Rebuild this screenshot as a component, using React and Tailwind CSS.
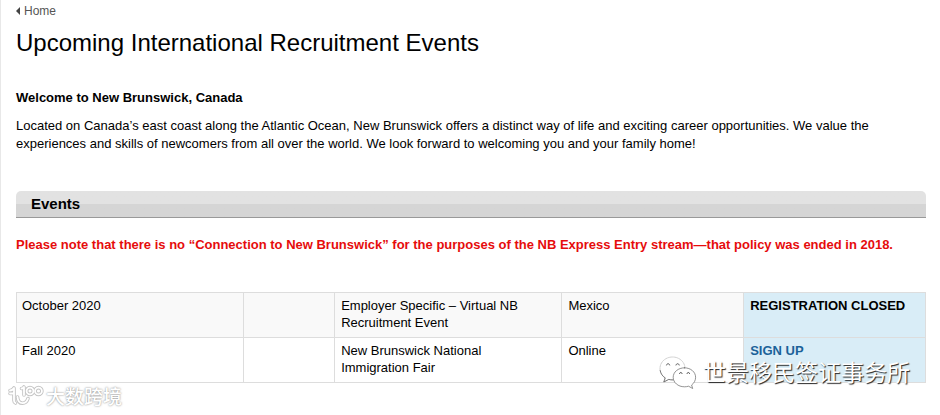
const events = [
    {
        date: 'October 2020',
        name: 'Employer Specific – Virtual NB Recruitment Event',
        place: 'Mexico',
        closed: true
    },
    {
        date: 'Fall 2020',
        name: 'New Brunswick National Immigration Fair',
        place: 'Online',
        closed: false
    }
];

function ChatIcon() {
    return (
        <svg viewBox="0 0 38 34" className="w-[38px] h-[34px]" fill="#fff" stroke="#777" strokeWidth="0.7" strokeLinecap="round" aria-hidden="true">
            <path d="M13.500 1C6.600 1 1 6 1 12.500c0 4.200 2 7.300 5.200 9.400L4.800 26l5-2.600c1.300.4 2.600.5 3.700.5 7 0 12.500-5 12.500-11.400S20.500 1 13.500 1z" stroke="#bbb" strokeDasharray="2 1" />
            <path d="M1.200 14.500c.5 3.200 2.300 5.700 5 7.400L4.800 26l5-2.600c1.300.4 2.600.5 4.200.5" stroke="#555" fill="none" />
            <path d="M25.500 11.800c-6.500 0-11.300 4.300-11.300 9.500s4.800 9.500 11.300 9.500c1.500 0 2.800-.2 4-.6l4.200 2.300-1.100-3.500c2.400-1.800 4-4.500 4-7.700 0-5.200-4.700-9.500-11.100-9.500z" stroke="#666" />
            <path d="M7.500 9c.4-1.800 2.800-1.800 3.200 0M17 9c.4-1.800 2.800-1.800 3.200 0M20.500 17.500c.3-1.500 2.300-1.500 2.600 0M28 17.500c.3-1.500 2.300-1.500 2.600 0" fill="none" stroke="#555" strokeWidth="1" />
        </svg>
    );
}

function HundredShapes() {
    return (
        <>
            <path d="M2 6.500c2 0 3-.8 4-2.500v12.500c0 1 .5 2 1.500 2.500M2 9.500h3" />
            <path d="M9.500 13c.3 4 2 6.200 5 6.200 3.200 0 4.700-2.200 5.500-4.700" />
            <path d="M13.500 4.500c1.200 0 2-.5 2.500-1.500v8" />
            <circle cx="22" cy="7" r="3.400" />
            <circle cx="30.500" cy="7" r="3.400" />
        </>
    );
}

function HundredIcon() {
    return (
        <svg viewBox="0 0 36 24" className="w-9 h-6" fill="none" strokeLinecap="round" strokeLinejoin="round" aria-hidden="true">
            <g stroke="#c4c4c4" strokeWidth="3.600">
                <HundredShapes />
            </g>
            <g stroke="#fff" strokeWidth="1.800">
                <HundredShapes />
            </g>
        </svg>
    );
}

export default function App() {
    return (
        <div
            className="relative min-h-screen bg-white border-l border-[#e8e8e8] pl-[15px] pr-3.5 pt-1 text-black"
            style={{ fontFamily: "'Liberation Sans', Arial, 'Noto Sans CJK SC', sans-serif" }}
        >
            <nav className="text-[12px] leading-[14px]">
                <a href="#home" className="inline-flex items-center gap-1 text-[#555]">
                    <svg viewBox="0 0 4 8" className="w-1 h-2" fill="#444" aria-hidden="true">
                        <path d="M4 0v8L0 4z" />
                    </svg>
                    Home
                </a>
            </nav>

            <h1 className="mt-[9px] text-[24px] leading-8">Upcoming International Recruitment Events</h1>

            <h2 className="mt-[30px] text-[13px] leading-[18px] font-bold">Welcome to New Brunswick, Canada</h2>
            <p className="mt-2.5 text-[13px] leading-[18px]">
                Located on Canada’s east coast along the Atlantic Ocean, New Brunswick offers a distinct way of life and
                exciting career opportunities. We value the experiences and skills of newcomers from all over the world. We
                look forward to welcoming you and your family home!
            </p>

            <h2 className="mt-[38px] h-[27px] rounded-t-[5px] border-b border-[#999] bg-linear-to-b from-[#e2e2e2] from-50% to-[#d5d5d5] to-50% px-[15px] text-[15px] leading-[26px] font-bold">
                Events
            </h2>
            <p className="mt-[18px] text-[13px] leading-[18px] font-bold text-[#e60c0c]">
                Please note that there is no “Connection to New Brunswick” for the purposes of the NB Express Entry
                stream—that policy was ended in 2018.
            </p>

            <table className="mt-[38px] w-full table-fixed border-collapse text-[13px] leading-[17px]">
                <colgroup>
                    <col className="w-1/4" />
                    <col className="w-1/10" />
                    <col className="w-1/4" />
                    <col className="w-1/5" />
                    <col className="w-1/5" />
                </colgroup>
                <tbody>
                    {events.map((event) => (
                        <tr key={event.date} className="h-[45px] align-top odd:bg-[#f9f9f9]">
                            <td className="border border-[#ddd] px-[5px] py-1">{event.date}</td>
                            <td className="border border-[#ddd] px-1.5 py-1"></td>
                            <td className="border border-[#ddd] pl-1.5 pr-10 py-1">{event.name}</td>
                            <td className="border border-[#ddd] px-1.5 py-1">{event.place}</td>
                            <td className="border border-[#ddd] bg-[#d9edf7] px-1.5 py-1 font-bold">
                                {event.closed ? (
                                    'REGISTRATION CLOSED'
                                ) : (
                                    <a href="#sign-up" className="text-[#1b6299]">SIGN UP</a>
                                )}
                            </td>
                        </tr>
                    ))}
                </tbody>
            </table>

            {/* watermarks lie over the page */}
            <div className="absolute left-[7px] top-[384px] flex items-end gap-0.5 text-[19px] leading-5 font-medium text-white [text-shadow:0_0_2px_#777]">
                <HundredIcon />
                <span>大数跨境</span>
            </div>
            <div className="absolute right-[30px] top-[356px] flex items-center gap-1.5 text-[23px] leading-6 text-white [text-shadow:1px_1px_1px_#222]">
                <ChatIcon />
                <span>世景移民签证事务所</span>
            </div>
        </div>
    );
}
